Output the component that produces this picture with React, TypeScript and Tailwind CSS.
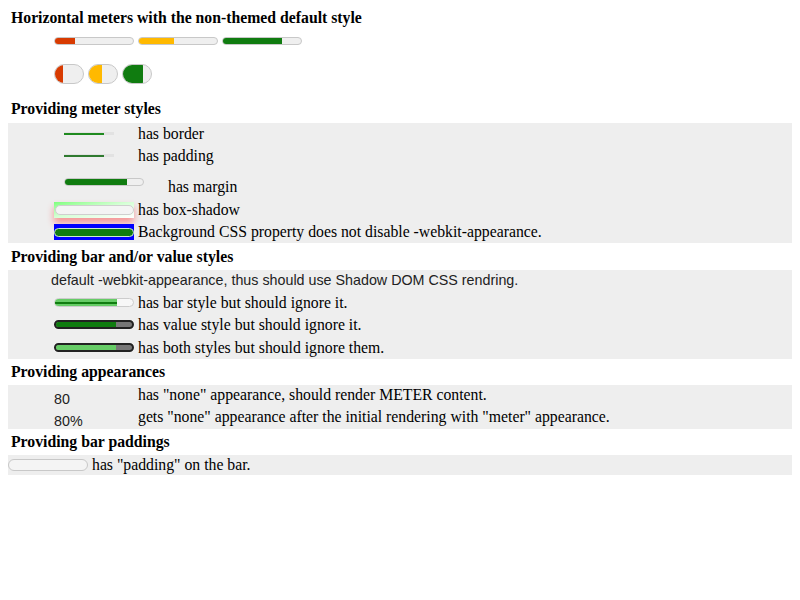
import React from "react";

const fill = "bg-[#107c10]";

function Heading({ children }: { children: React.ReactNode }) {
  return <div className="pl-[3px] font-bold leading-[18px]">{children}</div>;
}

export default function App() {
  return (
    <div className="p-2 font-['Liberation_Serif',serif] text-[15.75px] text-black leading-[18px]">
      <div className="pt-px">
        <Heading>Horizontal meters with the non-themed default style</Heading>
      </div>

      {/* plain meters */}
      <div className="mt-[10px] flex gap-1 pl-[46px]">
        {[
          { w: "w-[26%]", c: "bg-[#d83b01]" },
          { w: "w-[45%]", c: "bg-[#ffb900]" },
          { w: "w-[75%]", c: fill },
        ].map((m, i) => (
          <div key={i} className="h-2 w-20 overflow-hidden rounded-full border border-[#c8c8c8] bg-[#efefef]">
            <div className={`h-full ${m.w} ${m.c}`} />
          </div>
        ))}
      </div>

      <div className="mt-[19px] flex gap-1 pl-[46px]">
        {[
          { w: "w-[27%]", c: "bg-[#d83b01]" },
          { w: "w-[47%]", c: "bg-[#ffb900]" },
          { w: "w-[73%]", c: fill },
        ].map((m, i) => (
          <div key={i} className="h-5 w-[30px] overflow-hidden rounded-full border border-[#c8c8c8] bg-[#efefef]">
            <div className={`h-full ${m.w} ${m.c}`} />
          </div>
        ))}
      </div>

      <div className="mt-[16px]">
        <Heading>Providing meter styles</Heading>
      </div>

      <div className="mt-[5px] bg-[#eeeeee]">
        <div className="flex h-[21px] items-center">
          <div className="ml-[56px] flex h-[3px] w-[50px] items-center bg-[#e2e2e2]">
            <div className="h-[2px] w-[80%] bg-[#1f8a1f]" />
          </div>
          <span className="ml-6 mt-[1px]">has border</span>
        </div>
        <div className="flex h-[23px] items-center">
          <div className="ml-[56px] flex h-[3px] w-[50px] items-center bg-[#e2e2e2]">
            <div className="h-[2px] w-[80%] bg-[#2f7a2f]" />
          </div>
          <span className="ml-6 mt-[1px]">has padding</span>
        </div>
        <div className="flex h-[31px] items-start">
          <div className="ml-[56px] mt-[11px] h-2 w-20 overflow-hidden rounded-full border border-[#c8c8c8] bg-[#efefef]">
            <div className={`h-full w-[80%] ${fill}`} />
          </div>
          <span className="ml-6 mt-[11px]">has margin</span>
        </div>
        <div className="flex h-[23px] items-center">
          <div className="ml-[46px] flex h-4 w-20 items-center bg-gradient-to-br from-[#7dff7d] via-[#d8ffd8] to-white pl-px pt-[3px] pb-[2px] shadow-[0_5px_7px_rgba(255,40,40,0.45)]">
            <div className="h-[10px] w-full rounded-full border border-[#cfcfcf] bg-[#f4f4f4]" />
          </div>
          <span className="ml-1">has box-shadow</span>
        </div>
        <div className="flex h-[22px] items-center">
          <div className="ml-[46px] flex h-4 w-20 items-center bg-[#0000ff]">
            <div className={`h-[9px] w-full rounded-full border border-[#cfe8cf] ${fill}`} />
          </div>
          <span className="ml-1">Background CSS property does not disable -webkit-appearance.</span>
        </div>
      </div>

      <div className="flex h-[27px] items-center">
        <Heading>Providing bar and/or value styles</Heading>
      </div>

      <div className="bg-[#eeeeee]">
        <div className="flex h-[20px] items-center pl-[43px] font-['Liberation_Sans',sans-serif] text-[14.3px] text-[#222]">
          default -webkit-appearance, thus should use Shadow DOM CSS rendring.
        </div>
        <div className="flex h-[23px] items-center pt-[2px]">
          <div className="ml-[46px] flex h-[9px] w-20 overflow-hidden rounded-full border border-[#cccccc] bg-[#f7f7f7]">
            <div className="flex h-full w-[79%] items-center bg-[#66cc66]">
              <div className={`h-[2px] w-full ${fill}`} />
            </div>
          </div>
          <span className="ml-1">has bar style but should ignore it.</span>
        </div>
        <div className="flex h-[23px] items-center">
          <div className="ml-[46px] flex h-[9px] w-20 overflow-hidden rounded-full border-2 border-[#222] bg-[#777]">
            <div className={`h-full w-[79%] ${fill}`} />
          </div>
          <span className="ml-1">has value style but should ignore it.</span>
        </div>
        <div className="flex h-[23px] items-center">
          <div className="ml-[46px] flex h-[9px] w-20 overflow-hidden rounded-full border-2 border-[#222] bg-[#777]">
            <div className="h-full w-[79%] bg-[#66cc66]" />
          </div>
          <span className="ml-1">has both styles but should ignore them.</span>
        </div>
      </div>

      <div className="flex h-[26px] items-center">
        <Heading>Providing appearances</Heading>
      </div>

      <div className="bg-[#eeeeee]">
        <div className="flex h-[22px]">
          <span className="ml-[46px] mt-[5px] w-[84px] font-['Liberation_Sans',sans-serif] text-[14.3px] text-[#222]">80</span>
          <span className="mt-px">has "none" appearance, should render METER content.</span>
        </div>
        <div className="flex h-[22px]">
          <span className="ml-[46px] mt-[5px] w-[84px] font-['Liberation_Sans',sans-serif] text-[14.3px] text-[#222]">80%</span>
          <span className="mt-px">gets "none" appearance after the initial rendering with "meter" appearance.</span>
        </div>
      </div>

      <div className="flex h-[26px] items-center">
        <Heading>Providing bar paddings</Heading>
      </div>

      <div className="flex h-5 items-center bg-[#eeeeee]">
        <div className="h-3 w-20 rounded-full border border-[#c8c8c8] bg-[#f4f4f4]" />
        <span className="ml-1">has "padding" on the bar.</span>
      </div>
    </div>
  );
}
